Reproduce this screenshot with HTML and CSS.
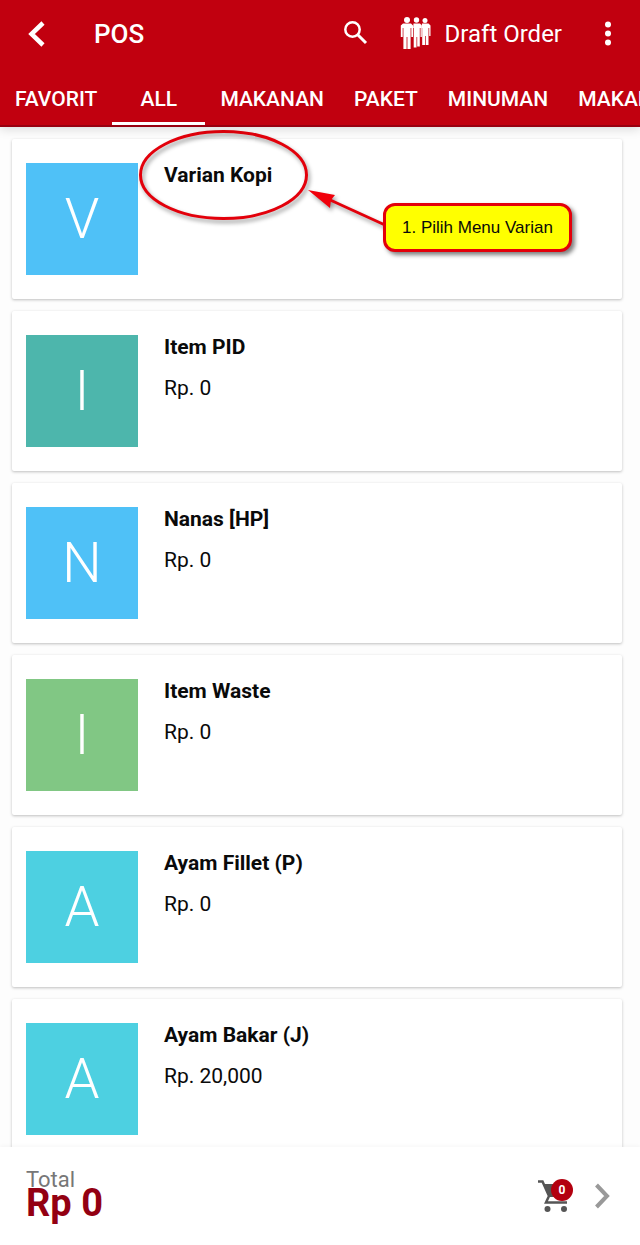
FILE: index.html
```html
<!DOCTYPE html>
<html lang="id">
<head>
    <meta charset="UTF-8">
    <meta name="viewport" content="width=device-width, initial-scale=1.0">
    <title>POS</title>
    <link rel="stylesheet" href="styles.css">
</head>
<body>
    <header class="header">
        <div class="toolbar">
            <button class="icon-btn" type="button" aria-label="Kembali">
                <svg width="20" height="28" viewBox="0 0 20 28"><path d="M17 3L5.500 14 17 25" fill="none" stroke="#fff" stroke-width="4.500"/></svg>
            </button>
            <h1 class="title">POS</h1>
            <button class="icon-btn" type="button" aria-label="Cari">
                <svg width="24" height="28" viewBox="0 0 24 28"><circle cx="8.500" cy="9.500" r="7.200" fill="none" stroke="#fff" stroke-width="2.500"/><path d="M13.500 14.500l8.500 8.500" stroke="#fff" stroke-width="3"/></svg>
            </button>
            <button class="draft-btn" type="button">
                <svg width="31" height="34" viewBox="0 0 31 34" fill="#fff">
                    <circle cx="25" cy="3.500" r="2.500"/>
                    <path d="M22 6.500h6.500l2 2V19h-1.300v-8h-.7v17h-2.800v-9h-.7v9h-2.800V11h-.8z"/>
                    <circle cx="16.500" cy="3" r="2.700"/>
                    <path d="M13.500 6.500h6.500l1.800 2V20h-1.300v-9h-.7v18.500h-2.600V20h-.7v10.500h-2.800V11h-.6z"/>
                    <circle cx="7" cy="3" r="3"/>
                    <path d="M3 6.500h8l2 2V20h-1.700v-9h-.7v21H7.400V20h-.8v12H3.400V11h-.7v9H.8V8.500z"/>
                </svg>
                Draft Order
            </button>
            <button class="icon-btn" type="button" aria-label="Menu">
                <svg width="8" height="28" viewBox="0 0 8 28" fill="#fff"><circle cx="4" cy="4.500" r="3"/><circle cx="4" cy="13.500" r="3"/><circle cx="4" cy="22.500" r="3"/></svg>
            </button>
        </div>
        <nav class="tabs">
            <a class="tab" href="#">FAVORIT</a>
            <a class="tab active" href="#">ALL</a>
            <a class="tab" href="#">MAKANAN</a>
            <a class="tab" href="#">PAKET</a>
            <a class="tab" href="#">MINUMAN</a>
            <a class="tab" href="#">MAKANAN</a>
        </nav>
    </header>

    <main class="items">
        <article class="card">
            <div class="thumb blue">V</div>
            <div class="info">
                <h2 class="name">Varian Kopi</h2>
            </div>
            <svg class="pointer" width="260" height="110" viewBox="0 0 260 110">
                <ellipse cx="87.500" cy="47" rx="83" ry="43.500" fill="none" stroke="#e3000b" stroke-width="3"/>
                <path d="M192 71l57 26" stroke="#e3000b" stroke-width="3"/>
                <path d="M172 62l27 5-4 5-1 8z" fill="#f0000b"/>
            </svg>
            <div class="callout">1. Pilih Menu Varian</div>
        </article>
        <article class="card">
            <div class="thumb teal">I</div>
            <div class="info">
                <h2 class="name">Item PID</h2>
                <p class="price">Rp. 0</p>
            </div>
        </article>
        <article class="card">
            <div class="thumb blue">N</div>
            <div class="info">
                <h2 class="name">Nanas [HP]</h2>
                <p class="price">Rp. 0</p>
            </div>
        </article>
        <article class="card">
            <div class="thumb green">I</div>
            <div class="info">
                <h2 class="name">Item Waste</h2>
                <p class="price">Rp. 0</p>
            </div>
        </article>
        <article class="card">
            <div class="thumb cyan">A</div>
            <div class="info">
                <h2 class="name">Ayam Fillet (P)</h2>
                <p class="price">Rp. 0</p>
            </div>
        </article>
        <article class="card">
            <div class="thumb cyan">A</div>
            <div class="info">
                <h2 class="name">Ayam Bakar (J)</h2>
                <p class="price">Rp. 20,000</p>
            </div>
        </article>
    </main>

    <footer class="footer">
        <div class="total">
            <div class="total-label">Total</div>
            <div class="total-value">Rp 0</div>
        </div>
        <button class="icon-btn cart" type="button" aria-label="Keranjang">
            <svg width="32" height="34" viewBox="0 0 32 34">
                <path d="M0 2.500h4.500L11 17l-3 6.500h21" fill="none" stroke="#555" stroke-width="2.500"/>
                <path d="M6 5h14v13h-8z" fill="#555"/>
                <circle cx="9.500" cy="30" r="3" fill="#555"/>
                <circle cx="26" cy="30" r="3" fill="#555"/>
            </svg>
            <span class="badge">0</span>
        </button>
        <button class="icon-btn" type="button" aria-label="Lanjut">
            <svg width="18" height="26" viewBox="0 0 18 26"><path d="M2.500 2L13 13 2.500 24" fill="none" stroke="#999" stroke-width="4"/></svg>
        </button>
    </footer>
</body>
</html>
```

FILE: styles.css
```css
* {
    margin: 0;
    padding: 0;
    box-sizing: border-box;
}

body {
    display: flex;
    flex-direction: column;
    height: 100vh;
    background: #fdfdfd;
    color: #0a0a0a;
    font-family: Roboto, "Liberation Sans", sans-serif;
}

button {
    background: none;
    border: none;
    color: inherit;
    font-family: inherit;
    cursor: pointer;
}

.icon-btn svg,
.draft-btn svg {
    display: block;
}

.header {
    position: relative;
    z-index: 1;
    background: #c1000f;
    border-bottom: 2px solid #970010;
    box-shadow: 0 2px 10px rgba(0, 0, 0, 0.15);
    color: #fff;
}

.toolbar {
    display: flex;
    align-items: center;
    height: 68px;
    padding: 0 28px 0 26px;
}

.title {
    flex: 1;
    margin-left: 48px;
    font-size: 26px;
    font-weight: 500;
}

.draft-btn {
    display: flex;
    align-items: center;
    gap: 14px;
    margin: 0 42px 0 32px;
    font-size: 24px;
}

.tabs {
    display: flex;
    height: 57px;
    overflow: hidden;
}

.tab {
    flex: none;
    min-width: 93px;
    padding: 0 15px;
    border-bottom: 3px solid transparent;
    color: #fff;
    font-size: 21px;
    font-weight: 500;
    line-height: 62px;
    text-align: center;
    text-decoration: none;
}

.tab.active {
    border-bottom-color: #fff;
}

.items {
    display: flex;
    flex: 1;
    flex-direction: column;
    gap: 12px;
    min-height: 0;
    padding: 12px 18px 0 12px;
    overflow: hidden;
}

.card {
    position: relative;
    display: flex;
    flex: none;
    gap: 26px;
    min-height: 160px;
    padding: 24px 14px;
    background: #fff;
    border-radius: 2px;
    box-shadow: 0 1px 3px rgba(0, 0, 0, 0.25);
}

.thumb {
    width: 112px;
    height: 112px;
    color: #fff;
    font-size: 56px;
    font-weight: 300;
    line-height: 112px;
    text-align: center;
}

.blue { background: #4fc1f7; }
.teal { background: #4db6ac; }
.green { background: #81c784; }
.cyan { background: #4dd0e1; }

.name {
    font-size: 21px;
    font-weight: 700;
    line-height: 24px;
}

.price {
    margin-top: 16px;
    font-size: 21px;
    line-height: 26px;
}

/* callout drawn over the first item */
.pointer {
    position: absolute;
    top: -11px;
    left: 124px;
    filter: drop-shadow(2px 3px 2px rgba(0, 0, 0, 0.4));
}

.callout {
    position: absolute;
    top: 64px;
    left: 371px;
    padding: 0 16px;
    background: #ff0;
    border: 3px solid #e3000b;
    border-radius: 12px;
    box-shadow: 3px 3px 4px rgba(0, 0, 0, 0.5);
    font-family: "Liberation Sans", Arial, sans-serif;
    font-size: 17px;
    line-height: 43px;
    white-space: nowrap;
}

.footer {
    display: flex;
    align-items: center;
    height: 98px;
    padding: 0 28px 0 26px;
    background: #fff;
    box-shadow: 0 -1px 4px rgba(0, 0, 0, 0.04);
    z-index: 1;
}

.total {
    flex: 1;
    padding-bottom: 8px;
}

.total-label {
    color: #777;
    font-size: 22px;
    line-height: 22px;
}

.total-value {
    color: #930012;
    font-size: 38px;
    font-weight: 700;
    line-height: 24px;
}

.cart {
    position: relative;
    margin-right: 24px;
}

.badge {
    position: absolute;
    top: 0;
    right: -3px;
    width: 22px;
    height: 22px;
    border-radius: 50%;
    background: #b3000f;
    color: #fff;
    font-size: 12px;
    font-weight: 700;
    line-height: 22px;
    text-align: center;
}
```
